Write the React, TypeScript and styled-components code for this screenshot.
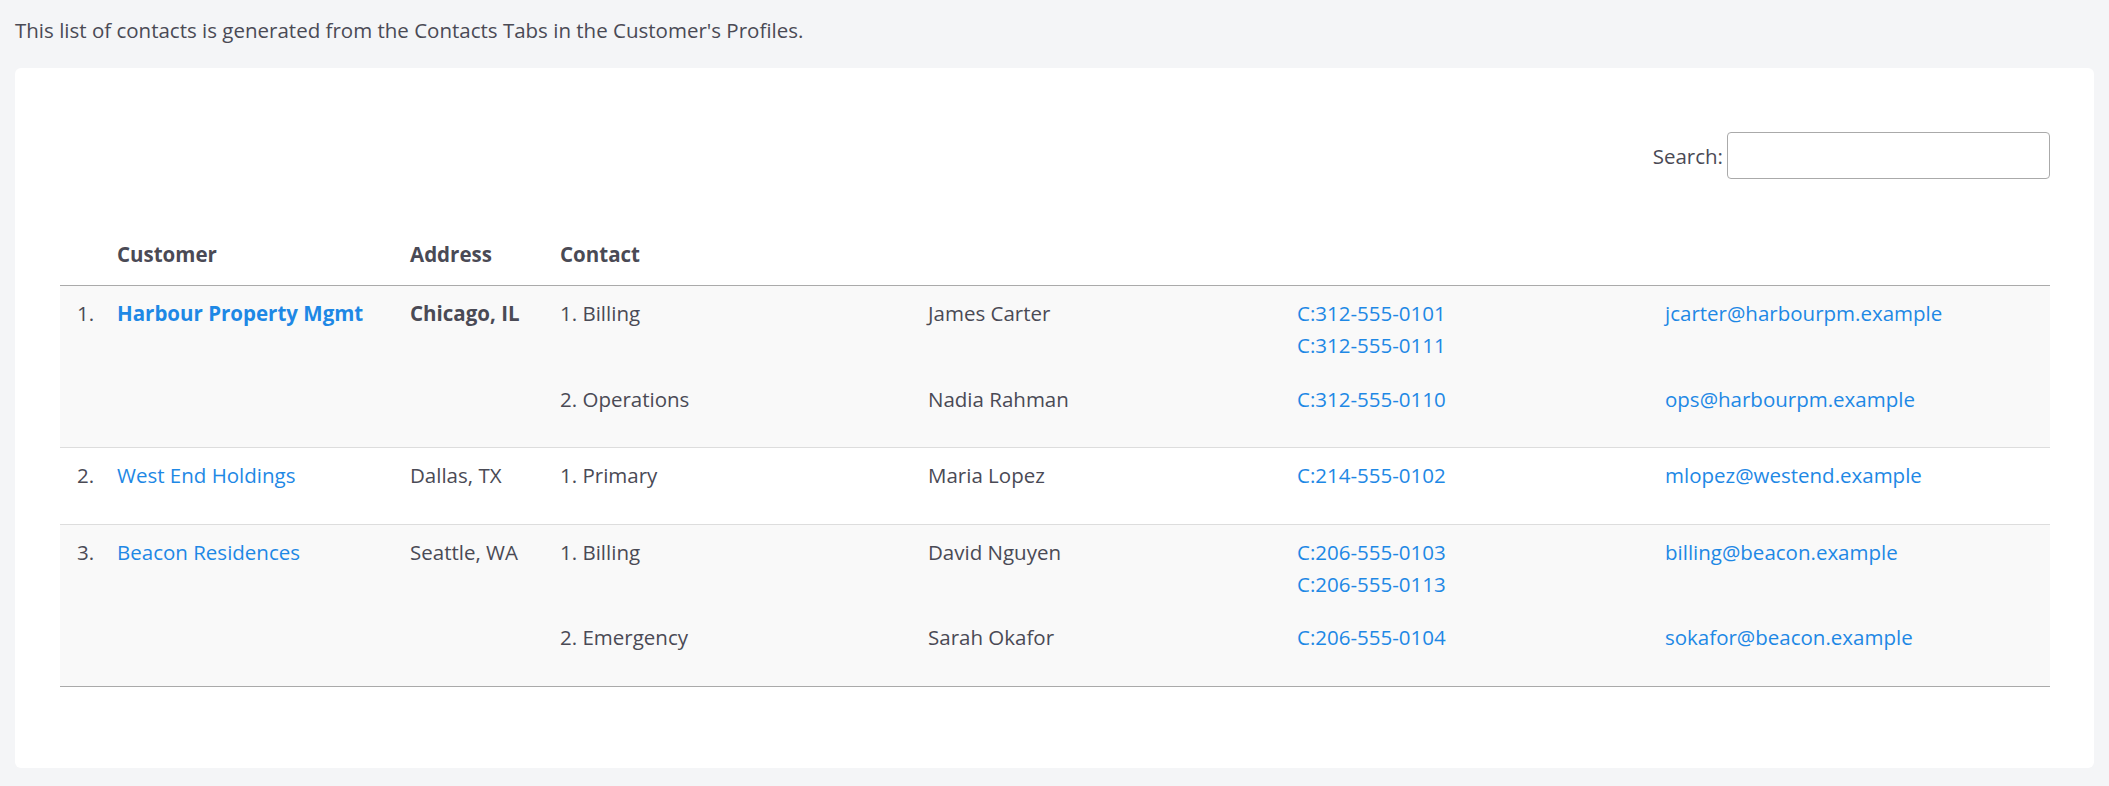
import React from "react";
import styled, { createGlobalStyle } from "styled-components";

const G = createGlobalStyle`
  body { margin: 0; background: #f4f5f7; font-family: "Open Sans", "Liberation Sans", sans-serif; color: #4a4a55; font-size: 20.5px; }
`;
const Page = styled.div`padding: 14px 15px 22px 15px;`;
const Intro = styled.div`line-height: 32px; margin-bottom: 22px;`;
const Card = styled.div`background: #fff; border-radius: 6px; padding: 64px 44px 81px 45px;`;
const SearchRow = styled.div`display: flex; justify-content: flex-end; align-items: center; gap: 4px; height: 47px;`;
const SearchInput = styled.input`width: 323px; height: 47px; box-sizing: border-box; border: 1px solid #aaa; border-radius: 4px; font: inherit;`;
const cols = "57px 293px 150px 368px 369px 368px 1fr";
const Head = styled.div`display: grid; grid-template-columns: ${cols}; margin-top: 59px; padding-bottom: 15px; border-bottom: 1.5px solid #aaa; font-weight: 700; line-height: 32px;`;
const Row = styled.div<{ $alt: boolean; $last?: boolean }>`
  display: grid; grid-template-columns: ${cols}; background: ${p => p.$alt ? "#f9f9f9" : "#fff"};
  padding: 11px 0; border-bottom: ${p => p.$last ? "1.5px solid #aaa" : "1px solid #ddd"}; line-height: 32px;
`;
const Num = styled.div`padding-left: 17px;`;
const Cell = styled.div<{ $bold?: boolean; $link?: boolean }>`font-weight: ${p => p.$bold ? 700 : 400}; color: ${p => p.$link ? "#1e88e5" : "inherit"};`;
const Contacts = styled.div`grid-column: 4 / 8; display: flex; flex-direction: column;`;
const Contact = styled.div`display: grid; grid-template-columns: 368px 369px 368px 1fr; margin-bottom: 21.5px;`;
const Link = styled.div`color: #1e88e5;`;

type C = { role: string; name: string; phones: string[]; email: string };
const data: { cust: string; addr: string; bold?: boolean; contacts: C[] }[] = [
  { cust: "Harbour Property Mgmt", addr: "Chicago, IL", bold: true, contacts: [
    { role: "1. Billing", name: "James Carter", phones: ["C:312-555-0101", "C:312-555-0111"], email: "jcarter@harbourpm.example" },
    { role: "2. Operations", name: "Nadia Rahman", phones: ["C:312-555-0110"], email: "ops@harbourpm.example" }] },
  { cust: "West End Holdings", addr: "Dallas, TX", contacts: [
    { role: "1. Primary", name: "Maria Lopez", phones: ["C:214-555-0102"], email: "mlopez@westend.example" }] },
  { cust: "Beacon Residences", addr: "Seattle, WA", contacts: [
    { role: "1. Billing", name: "David Nguyen", phones: ["C:206-555-0103", "C:206-555-0113"], email: "billing@beacon.example" },
    { role: "2. Emergency", name: "Sarah Okafor", phones: ["C:206-555-0104"], email: "sokafor@beacon.example" }] },
];

export default function App() {
  return (
    <Page>
      <G />
      <Intro>This list of contacts is generated from the Contacts Tabs in the Customer's Profiles.</Intro>
      <Card>
        <SearchRow>Search:<SearchInput /></SearchRow>
        <Head><div /><div>Customer</div><div>Address</div><div>Contact</div></Head>
        {data.map((r, i) => (
          <Row key={i} $alt={i % 2 === 0} $last={i === data.length - 1}>
            <Num>{i + 1}.</Num>
            <Cell $bold={r.bold} $link>{r.cust}</Cell>
            <Cell $bold={r.bold}>{r.addr}</Cell>
            <Contacts>
              {r.contacts.map((c, j) => (
                <Contact key={j}>
                  <div>{c.role}</div>
                  <div>{c.name}</div>
                  <div>{c.phones.map(p => <Link key={p}>{p}</Link>)}</div>
                  <Link>{c.email}</Link>
                </Contact>
              ))}
            </Contacts>
          </Row>
        ))}
      </Card>
    </Page>
  );
}
